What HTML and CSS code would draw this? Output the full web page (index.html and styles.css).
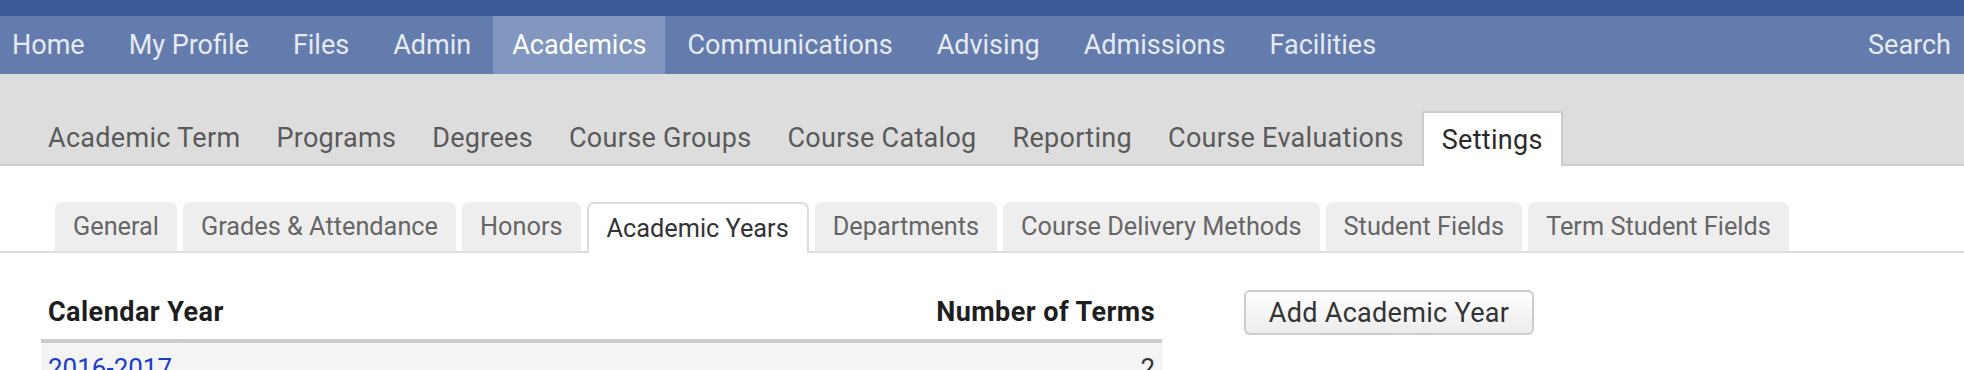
FILE: index.html
```html
<!DOCTYPE html>
<html lang="en">
<head>
<meta charset="utf-8">
<title>Academics - Settings</title>
<link rel="stylesheet" href="styles.css">
</head>
<body>
<div class="topbar"></div>
<nav class="mainnav">
  <ul class="mainnav-list">
    <li class="mainnav-item">Home</li>
    <li class="mainnav-item">My Profile</li>
    <li class="mainnav-item">Files</li>
    <li class="mainnav-item">Admin</li>
    <li class="mainnav-item is-active">Academics</li>
    <li class="mainnav-item">Communications</li>
    <li class="mainnav-item">Advising</li>
    <li class="mainnav-item">Admissions</li>
    <li class="mainnav-item">Facilities</li>
  </ul>
  <div class="mainnav-search">Search</div>
</nav>
<div class="subnav">
  <ul class="subnav-list">
    <li class="subnav-item">Academic Term</li>
    <li class="subnav-item">Programs</li>
    <li class="subnav-item">Degrees</li>
    <li class="subnav-item">Course Groups</li>
    <li class="subnav-item">Course Catalog</li>
    <li class="subnav-item">Reporting</li>
    <li class="subnav-item">Course Evaluations</li>
    <li class="subnav-item is-active">Settings</li>
  </ul>
</div>
<div class="tabs">
  <ul class="tabs-list">
    <li class="tab">General</li>
    <li class="tab">Grades &amp; Attendance</li>
    <li class="tab">Honors</li>
    <li class="tab is-active">Academic Years</li>
    <li class="tab">Departments</li>
    <li class="tab">Course Delivery Methods</li>
    <li class="tab">Student Fields</li>
    <li class="tab">Term Student Fields</li>
  </ul>
</div>
<main class="content">
  <table class="years">
    <thead>
      <tr>
        <th class="col-year">Calendar Year</th>
        <th class="col-terms">Number of Terms</th>
      </tr>
    </thead>
    <tbody>
      <tr>
        <td class="col-year"><a href="#" class="year-link">2016-2017</a></td>
        <td class="col-terms">2</td>
      </tr>
    </tbody>
  </table>
  <div class="actions">
    <button class="btn" type="button">Add Academic Year</button>
  </div>
</main>
</body>
</html>
```
FILE: styles.css
```css
* { box-sizing: border-box; }
html, body { margin: 0; padding: 0; background: #fff; }
body {
  font-family: Roboto, "Liberation Sans", Arial, sans-serif;
  color: #333;
}
ul { list-style: none; margin: 0; padding: 0; }

.topbar { height: 16px; background: #3b5998; }

.mainnav {
  display: flex;
  justify-content: space-between;
  height: 58px;
  background: #637cad;
}
.mainnav-list { display: flex; }
.mainnav-item {
  display: flex;
  align-items: center;
  padding: 0 22px;
  font-size: 27px;
  color: #e6eaf3;
}
.mainnav-item:first-child { padding-left: 12px; }
.mainnav-item.is-active { background: #8297c0; color: #fff; padding: 0 19px; }
.mainnav-search {
  display: flex;
  align-items: center;
  padding: 0 13px 0 0;
  font-size: 27px;
  color: #e6eaf3;
}

.subnav {
  background: #dddddd;
  border-bottom: 2px solid #cccccc;
  padding: 37px 0 0 30px;
}
.subnav-list { display: flex; align-items: flex-end; }
.subnav-item {
  height: 53px;
  display: flex;
  align-items: center;
  padding: 0 18px;
  font-size: 27px;
  letter-spacing: 0.3px;
  color: #5a5a5a;
}
.subnav-item.is-active {
  height: 55px;
  margin-bottom: -2px;
  background: #fff;
  border: 2px solid #cccccc;
  border-bottom: none;
  color: #2b2b2b;
}

.tabs {
  margin-top: 36px;
  border-bottom: 2px solid #dddddd;
  padding-left: 55px;
}
.tabs-list { display: flex; align-items: flex-end; gap: 6px; }
.tab {
  height: 49px;
  display: flex;
  align-items: center;
  padding: 0 18px;
  background: #eeeeee;
  border-radius: 7px 7px 0 0;
  font-size: 25.3px;
  color: #666;
}
.tab.is-active {
  height: 51px;
  margin-bottom: -2px;
  background: #fff;
  border: 2px solid #dddddd;
  border-bottom: none;
  color: #333;
}

.content {
  display: flex;
  align-items: flex-start;
  gap: 82px;
  padding: 37px 0 0 41px;
}
.years {
  width: 1121px;
  border-collapse: collapse;
}
.years th {
  font-size: 27px;
  font-weight: 700;
  letter-spacing: 0.45px;
  color: #1e1e1e;
  padding: 6px 7px 11px;
  border-bottom: 4px solid #cccccc;
}
.years td {
  background: #f4f4f4;
  font-size: 26px;
  padding: 10px 7px;
}
.col-year { text-align: left; }
.col-terms { text-align: right; }
.year-link { color: #1a3ccc; text-decoration: underline; }

.btn {
  width: 290px;
  height: 45px;
  font-family: inherit;
  font-size: 27px;
  letter-spacing: 0.3px;
  color: #333;
  background: linear-gradient(#ffffff, #ececec);
  border: 2px solid #cccccc;
  border-radius: 6px;
}
```
